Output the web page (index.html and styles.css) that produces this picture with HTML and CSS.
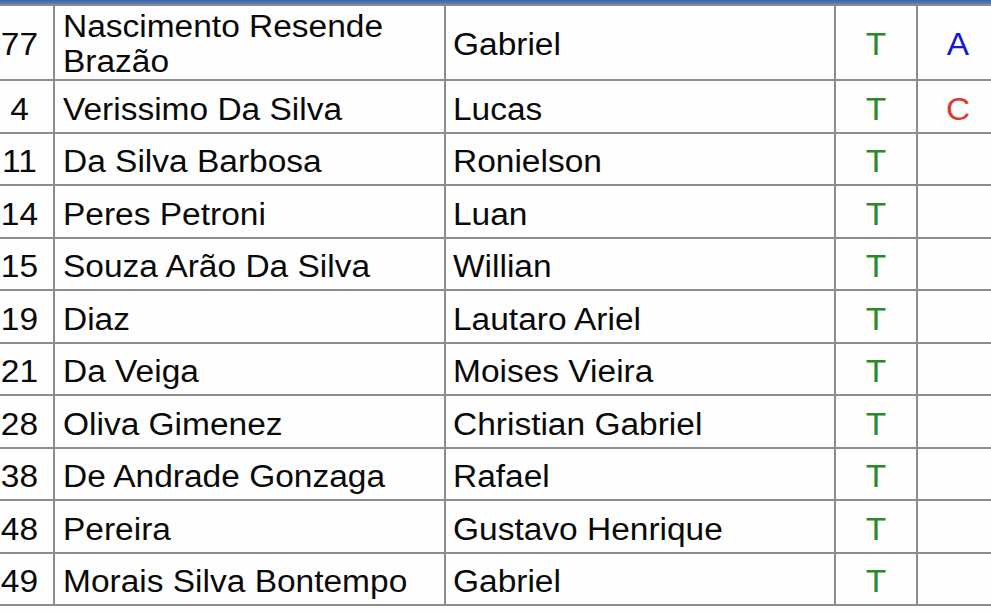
FILE: index.html
```html
<!DOCTYPE html>
<html lang="pt">
<head>
<meta charset="utf-8">
<title>Elenco</title>
<link rel="stylesheet" href="styles.css">
</head>
<body>
<div class="topbar"></div>
<table class="roster">
  <colgroup>
    <col class="c-num"><col class="c-last"><col class="c-first"><col class="c-flag"><col class="c-role">
  </colgroup>
  <tbody>
    <tr class="tall">
      <td class="num"><div class="t">77</div></td>
      <td class="name"><div class="t">Nascimento Resende<br>Brazão</div></td>
      <td class="name2"><div class="t">Gabriel</div></td>
      <td class="ctr"><div class="t green">T</div></td>
      <td class="ctr"><div class="t blue">A</div></td>
    </tr>
    <tr>
      <td class="num"><div class="t">4</div></td>
      <td class="name"><div class="t">Verissimo Da Silva</div></td>
      <td class="name2"><div class="t">Lucas</div></td>
      <td class="ctr"><div class="t green">T</div></td>
      <td class="ctr"><div class="t red">C</div></td>
    </tr>
    <tr>
      <td class="num"><div class="t">11</div></td>
      <td class="name"><div class="t">Da Silva Barbosa</div></td>
      <td class="name2"><div class="t">Ronielson</div></td>
      <td class="ctr"><div class="t green">T</div></td>
      <td class="ctr"></td>
    </tr>
    <tr>
      <td class="num"><div class="t">14</div></td>
      <td class="name"><div class="t">Peres Petroni</div></td>
      <td class="name2"><div class="t">Luan</div></td>
      <td class="ctr"><div class="t green">T</div></td>
      <td class="ctr"></td>
    </tr>
    <tr>
      <td class="num"><div class="t">15</div></td>
      <td class="name"><div class="t">Souza Arão Da Silva</div></td>
      <td class="name2"><div class="t">Willian</div></td>
      <td class="ctr"><div class="t green">T</div></td>
      <td class="ctr"></td>
    </tr>
    <tr>
      <td class="num"><div class="t">19</div></td>
      <td class="name"><div class="t">Diaz</div></td>
      <td class="name2"><div class="t">Lautaro Ariel</div></td>
      <td class="ctr"><div class="t green">T</div></td>
      <td class="ctr"></td>
    </tr>
    <tr>
      <td class="num"><div class="t">21</div></td>
      <td class="name"><div class="t">Da Veiga</div></td>
      <td class="name2"><div class="t">Moises Vieira</div></td>
      <td class="ctr"><div class="t green">T</div></td>
      <td class="ctr"></td>
    </tr>
    <tr>
      <td class="num"><div class="t">28</div></td>
      <td class="name"><div class="t">Oliva Gimenez</div></td>
      <td class="name2"><div class="t">Christian Gabriel</div></td>
      <td class="ctr"><div class="t green">T</div></td>
      <td class="ctr"></td>
    </tr>
    <tr>
      <td class="num"><div class="t">38</div></td>
      <td class="name"><div class="t">De Andrade Gonzaga</div></td>
      <td class="name2"><div class="t">Rafael</div></td>
      <td class="ctr"><div class="t green">T</div></td>
      <td class="ctr"></td>
    </tr>
    <tr>
      <td class="num"><div class="t">48</div></td>
      <td class="name"><div class="t">Pereira</div></td>
      <td class="name2"><div class="t">Gustavo Henrique</div></td>
      <td class="ctr"><div class="t green">T</div></td>
      <td class="ctr"></td>
    </tr>
    <tr>
      <td class="num"><div class="t">49</div></td>
      <td class="name"><div class="t">Morais Silva Bontempo</div></td>
      <td class="name2"><div class="t">Gabriel</div></td>
      <td class="ctr"><div class="t green">T</div></td>
      <td class="ctr"></td>
    </tr>
  </tbody>
</table>
</body>
</html>
```

FILE: styles.css
```css
html, body {
  margin: 0;
  padding: 0;
  overflow: hidden;
  background: #fefefe;
}

body {
  font-family: "Liberation Sans", Arial, sans-serif;
  color: #0a0a0a;
}

.topbar {
  height: 4px;
  background: linear-gradient(#3b64a8, #5a7db6);
}

.roster {
  table-layout: fixed;
  border-collapse: separate;
  border-spacing: 0;
  width: 1014px;
  margin-left: -14px;
  border-top: 2px solid #8c8c8c;
  font-size: 31px;
  line-height: 35px;
}

.c-num { width: 69px; }
.c-last { width: 391px; }
.c-first { width: 390px; }
.c-flag { width: 82px; }
.c-role { width: 82px; }

.roster td {
  box-sizing: border-box;
  height: 52.5px;
  padding: 6px 0 0 0;
  vertical-align: middle;
  border-right: 2px solid #8c8c8c;
  border-bottom: 2px solid #8c8c8c;
  overflow: hidden;
  white-space: nowrap;
}

.roster tr.tall td {
  height: 75px;
  padding-top: 3px;
}

.t {
  transform: scaleX(1.08);
  transform-origin: center;
}

.num { text-align: center; }

.roster td.name { padding-left: 8px; }
.roster td.name2 { padding-left: 7px; }

.name .t, .name2 .t { transform-origin: left center; }

.ctr { text-align: center; }

.green { color: #2a8a2a; }
.blue { color: #1616d6; }
.red { color: #dc3a2c; }
```
